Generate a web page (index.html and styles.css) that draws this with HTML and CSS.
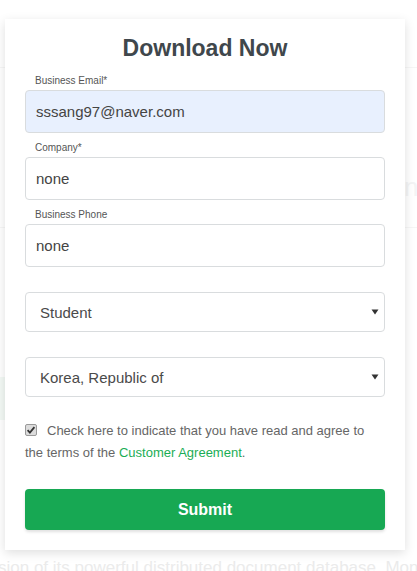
FILE: index.html
```html
<!DOCTYPE html>
<html>
<head>
<meta charset="utf-8">
<link rel="stylesheet" href="styles.css">
</head>
<body>
<div class="backdrop">
  <div class="bg-line bg-line-1"></div>
  <div class="bg-heading">ng</div>
  <div class="bg-line bg-line-2"></div>
  <div class="bg-green"></div>
  <div class="bg-text">sion of its powerful distributed document database, MongoDB E</div>
</div>
<form class="card">
  <h2 class="title">Download Now</h2>
  <div class="field">
    <label class="label">Business Email*</label>
    <input class="input autofill" type="text" value="sssang97@naver.com">
  </div>
  <div class="field">
    <label class="label">Company*</label>
    <input class="input" type="text" value="none">
  </div>
  <div class="field">
    <label class="label">Business Phone</label>
    <input class="input" type="text" value="none">
  </div>
  <div class="select-wrap">
    <select class="select"><option>Student</option></select>
    <svg class="arrow" width="8" height="6" viewBox="0 0 8 6"><path d="M0.5 0.5 H7.5 L4 5.5 Z" fill="#333"/></svg>
  </div>
  <div class="select-wrap">
    <select class="select"><option>Korea, Republic of</option></select>
    <svg class="arrow" width="8" height="6" viewBox="0 0 8 6"><path d="M0.5 0.5 H7.5 L4 5.5 Z" fill="#333"/></svg>
  </div>
  <p class="agree">
    <span class="checkbox"><svg width="12" height="12" viewBox="0 0 12 12"><rect x="0.5" y="0.5" width="11" height="11" rx="1.5" fill="#dcdcdc" stroke="#9a9a9a"/><path d="M2.6 6.2 L4.9 8.6 L9.4 3.2" fill="none" stroke="#333" stroke-width="1.8"/></svg></span>Check here to indicate that you have read and agree to the terms of the <a class="link" href="#">Customer Agreement</a>.
  </p>
  <button class="submit" type="button">Submit</button>
</form>
</body>
</html>
```

FILE: styles.css
```css
* { box-sizing: border-box; }
html, body { margin: 0; padding: 0; }
body {
  width: 417px;
  height: 571px;
  overflow: hidden;
  background: #fff;
  font-family: "Liberation Sans", Arial, sans-serif;
  position: relative;
  padding-top: 19px;
}
.backdrop {
  position: absolute;
  inset: 0;
  z-index: 0;
}
.bg-line {
  position: absolute;
  left: 0;
  right: 0;
  height: 1px;
  background: #f6f6f6;
}
.bg-line-1 { top: 67px; }
.bg-line-2 { top: 227px; }
.bg-heading {
  position: absolute;
  left: 404px;
  top: 172px;
  font-size: 26px;
  color: #f3f4f5;
}
.bg-green {
  position: absolute;
  left: 0;
  top: 377px;
  width: 10px;
  height: 43px;
  background: #f3f9f5;
}
.bg-text {
  position: absolute;
  left: -2px;
  top: 558px;
  white-space: nowrap;
  font-size: 17px;
  color: #ebebeb;
}
.card {
  position: relative;
  z-index: 1;
  margin: 0 0 0 5px;
  width: 400px;
  background: #fff;
  box-shadow: 0 3px 10px rgba(0,0,0,0.13);
  padding: 15px 20px 20px;
  display: flex;
  flex-direction: column;
}
.title {
  margin: 0 0 13px;
  text-align: center;
  font-size: 23px;
  line-height: 28px;
  font-weight: bold;
  color: #40474c;
}
.field {
  display: flex;
  flex-direction: column;
  margin-bottom: 9px;
}
.label {
  font-size: 10px;
  line-height: 12px;
  color: #555;
  padding-left: 10px;
  margin-bottom: 3px;
}
.input {
  height: 43px;
  border: 1px solid #d9dcde;
  border-radius: 4px;
  padding: 0 10px;
  font-family: "Liberation Sans", Arial, sans-serif;
  font-size: 15px;
  color: #444;
  background: #fff;
  outline: none;
}
.input.autofill { background: #e8f0fe; }
.select-wrap {
  position: relative;
  margin-top: 16px;
}
.select-wrap + .select-wrap { margin-top: 25px; }
.select {
  width: 100%;
  height: 40px;
  border: 1px solid #d9dcde;
  border-radius: 4px;
  padding: 0 14px;
  font-family: "Liberation Sans", Arial, sans-serif;
  font-size: 15px;
  color: #4a4a4a;
  background: #fff;
  -webkit-appearance: none;
  appearance: none;
  outline: none;
  display: block;
}
.arrow {
  position: absolute;
  right: 6px;
  top: 17px;
}
.agree {
  margin: 23px 0 25px;
  font-size: 13px;
  line-height: 22px;
  color: #666;
}
.checkbox {
  display: inline-block;
  width: 12px;
  height: 12px;
  margin-right: 10px;
  vertical-align: -1px;
}
.checkbox svg { display: block; }
.link {
  color: #1aad55;
  text-decoration: none;
}
.submit {
  height: 41px;
  border: none;
  border-radius: 4px;
  background: #17a853;
  color: #fff;
  font-family: "Liberation Sans", Arial, sans-serif;
  font-size: 16px;
  font-weight: bold;
  box-shadow: 0 2px 3px rgba(0,0,0,0.12);
}
```
